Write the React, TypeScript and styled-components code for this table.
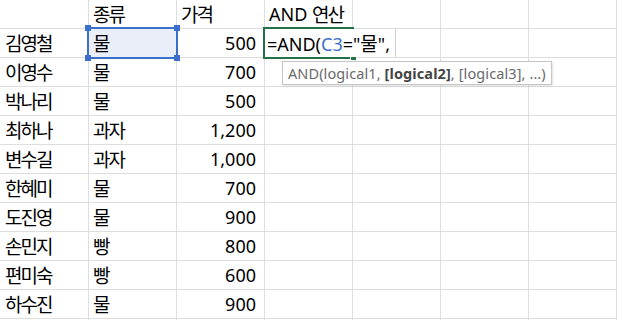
import React from "react";
import styled, { createGlobalStyle } from "styled-components";

const GlobalStyle = createGlobalStyle`
  html, body { margin: 0; padding: 0; background: #ffffff; }
  body {
    font-family: "Noto Sans", "Noto Sans CJK KR", sans-serif;
    color: #000000;
    overflow: hidden;
  }
`;

const GRID = "#dedede";
const BLUE = "#3a6fcb";
const GREEN = "#217346";

const Sheet = styled.div`
  display: grid;
  grid-template-columns: 89px repeat(6, 88px);
  grid-auto-rows: 29px;
  width: 617px;
  height: 320px;
  overflow: hidden;
  font-family: "Noto Sans", "Noto Sans CJK KR", sans-serif;
  font-size: 18px;
`;

const Cell = styled.div<{ $align?: "left" | "right"; $first?: boolean; $selected?: boolean }>`
  position: relative;
  box-sizing: border-box;
  border-right: 1px solid ${GRID};
  border-bottom: 1px solid ${GRID};
  display: flex;
  align-items: center;
  justify-content: ${(p) => (p.$align === "right" ? "flex-end" : "flex-start")};
  padding: 0 ${(p) => (p.$align === "right" ? "8px" : "0")} 0
    ${(p) => (p.$align === "right" ? "0" : p.$first ? "5px" : "4px")};
  white-space: nowrap;
  line-height: 28px;
  background: ${(p) => (p.$selected ? "#e9eef8" : "transparent")};
`;

const Hangul = styled.span`
  font-family: "Noto Sans CJK KR", sans-serif;
  font-size: 19px;
  letter-spacing: -2px;
`;

const SelectionFrame = styled.div`
  position: absolute;
  left: -2px;
  top: -2px;
  width: 91px;
  height: 32px;
  box-sizing: border-box;
  border: 2px solid ${BLUE};
  z-index: 2;
  pointer-events: none;
`;

const Handle = styled.span<{ $x: "l" | "r"; $y: "t" | "b" }>`
  position: absolute;
  width: 6px;
  height: 6px;
  background: ${BLUE};
  ${(p) => (p.$x === "l" ? "left: -4px;" : "right: -4px;")}
  ${(p) => (p.$y === "t" ? "top: -4px;" : "bottom: -4px;")}
`;

const ActiveFrame = styled.div`
  position: absolute;
  left: -2px;
  top: -2px;
  width: 91px;
  height: 32px;
  box-sizing: border-box;
  border: 2px solid ${GREEN};
  border-right: none;
  z-index: 2;
  pointer-events: none;
`;

const FillHandle = styled.span`
  position: absolute;
  right: -3px;
  bottom: -4px;
  width: 5px;
  height: 5px;
  background: ${GREEN};
  border: 1px solid #ffffff;
`;

const EditBox = styled.div`
  position: absolute;
  left: 0;
  top: 0;
  width: 131px;
  height: 28px;
  box-sizing: border-box;
  background: #ffffff;
  border-right: 1px solid #cfcfcf;
  padding-left: 2px;
  line-height: 28px;
  z-index: 3;
  white-space: nowrap;
`;

const FormulaHangul = styled(Hangul)`
  letter-spacing: 0;
`;

const Ref = styled.span`
  color: ${BLUE};
`;

const Tooltip = styled.div`
  position: absolute;
  left: 17px;
  top: 32px;
  height: 24px;
  box-sizing: border-box;
  padding: 0 5px;
  display: flex;
  align-items: center;
  background: #ffffff;
  border: 1px solid #c6c6c6;
  box-shadow: 1px 1px 2px rgba(0, 0, 0, 0.12);
  color: #6a6a6a;
  font-family: "Noto Sans", sans-serif;
  font-size: 14.5px;
  letter-spacing: 0.1px;
  line-height: 22px;
  white-space: nowrap;
  z-index: 4;
`;

const Strong = styled.b`
  color: #444444;
  font-weight: 700;
`;

type Row = [string, string, number];

const rows: Row[] = [
  ["김영철", "물", 500],
  ["이영수", "물", 700],
  ["박나리", "물", 500],
  ["최하나", "과자", 1200],
  ["변수길", "과자", 1000],
  ["한혜미", "물", 700],
  ["도진영", "물", 900],
  ["손민지", "빵", 800],
  ["편미숙", "빵", 600],
  ["하수진", "물", 900],
];

const Empty = () => (
  <>
    <Cell />
    <Cell />
    <Cell />
  </>
);

export default function App() {
  return (
    <>
      <GlobalStyle />
      <Sheet>
        <Cell $first />
        <Cell>
          <Hangul>종류</Hangul>
        </Cell>
        <Cell>
          <Hangul>가격</Hangul>
        </Cell>
        <Cell>
          AND&nbsp;<Hangul>연산</Hangul>
        </Cell>
        <Empty />

        {rows.map(([name, kind, price], i) => (
          <React.Fragment key={name}>
            <Cell $first>
              <Hangul>{name}</Hangul>
            </Cell>
            <Cell $selected={i === 0}>
              <Hangul>{kind}</Hangul>
              {i === 0 && (
                <SelectionFrame>
                  <Handle $x="l" $y="t" />
                  <Handle $x="r" $y="t" />
                  <Handle $x="l" $y="b" />
                  <Handle $x="r" $y="b" />
                </SelectionFrame>
              )}
            </Cell>
            <Cell $align="right">{price.toLocaleString("en-US")}</Cell>
            <Cell>
              {i === 0 && (
                <>
                  <ActiveFrame>
                    <FillHandle />
                  </ActiveFrame>
                  <EditBox>
                    =AND(<Ref>C3</Ref>="<FormulaHangul>물</FormulaHangul>",
                  </EditBox>
                  <Tooltip>
                    AND(logical1,&nbsp;<Strong>[logical2]</Strong>, [logical3], ...)
                  </Tooltip>
                </>
              )}
            </Cell>
            <Empty />
          </React.Fragment>
        ))}
        <Cell $first />
        <Cell />
        <Cell />
        <Cell />
        <Empty />
      </Sheet>
    </>
  );
}
